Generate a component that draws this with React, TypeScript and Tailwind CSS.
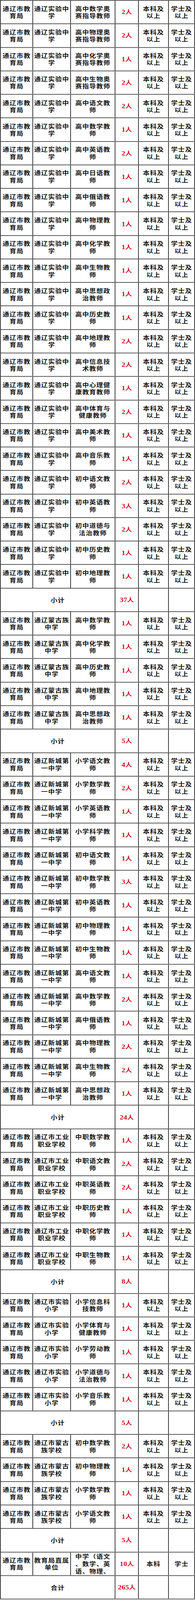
import React, { useLayoutEffect, useState } from 'react';

type Job = { kind: 'job'; school: string; post: string; n: number; edu?: string; deg?: string };
type Sub = { kind: 'sub'; label: string; n: number };
type Row = Job | Sub;

const SY = '通辽实验中学';
const MG = '通辽蒙古族中学';
const XC = '通辽新城第一中学';
const GY = '通辽市工业职业学校';
const XX = '通辽市实验小学';
const MX = '通辽市蒙古族学校';

const j = (school: string, post: string, n: number): Job => ({ kind: 'job', school, post, n });

const rows: Row[] = [
    j(SY, '高中数学奥赛指导教师', 2),
    j(SY, '高中物理奥赛指导教师', 2),
    j(SY, '高中化学奥赛指导教师', 1),
    j(SY, '高中生物奥赛指导教师', 2),
    j(SY, '高中语文教师', 2),
    j(SY, '高中数学教师', 1),
    j(SY, '高中英语教师', 2),
    j(SY, '高中日语教师', 1),
    j(SY, '高中俄语教师', 1),
    j(SY, '高中物理教师', 1),
    j(SY, '高中化学教师', 1),
    j(SY, '高中生物教师', 1),
    j(SY, '高中思想政治教师', 1),
    j(SY, '高中历史教师', 1),
    j(SY, '高中地理教师', 2),
    j(SY, '高中信息技术教师', 2),
    j(SY, '高中心理健康教育教师', 1),
    j(SY, '高中体育与健康教师', 2),
    j(SY, '高中美术教师', 1),
    j(SY, '高中音乐教师', 1),
    j(SY, '初中语文教师', 2),
    j(SY, '初中英语教师', 3),
    j(SY, '初中道德与法治教师', 2),
    j(SY, '初中历史教师', 1),
    j(SY, '初中地理教师', 1),
    { kind: 'sub', label: '小计', n: 37 },
    j(MG, '高中数学教师', 1),
    j(MG, '高中化学教师', 1),
    j(MG, '高中历史教师', 1),
    j(MG, '高中地理教师', 1),
    j(MG, '高中思想政治教师', 1),
    { kind: 'sub', label: '小计', n: 5 },
    j(XC, '小学语文教师', 4),
    j(XC, '小学数学教师', 2),
    j(XC, '小学英语教师', 1),
    j(XC, '小学科学教师', 1),
    j(XC, '初中语文教师', 1),
    j(XC, '初中数学教师', 3),
    j(XC, '初中英语教师', 1),
    j(XC, '初中物理教师', 1),
    j(XC, '初中生物教师', 1),
    j(XC, '高中语文教师', 1),
    j(XC, '高中数学教师', 2),
    j(XC, '高中俄语教师', 1),
    j(XC, '高中物理教师', 2),
    j(XC, '高中生物教师', 2),
    j(XC, '高中思想政治教师', 1),
    { kind: 'sub', label: '小计', n: 24 },
    j(GY, '中职数学教师', 1),
    j(GY, '中职语文教师', 2),
    j(GY, '中职英语教师', 2),
    j(GY, '中职历史教师', 1),
    j(GY, '中职化学教师', 1),
    j(GY, '中职生物教师', 1),
    { kind: 'sub', label: '小计', n: 8 },
    j(XX, '小学信息科技教师', 1),
    j(XX, '小学体育与健康教师', 1),
    j(XX, '小学劳动教师', 1),
    j(XX, '小学道德与法治教师', 1),
    j(XX, '小学音乐教师', 1),
    { kind: 'sub', label: '小计', n: 5 },
    j(MX, '初中数学教师', 2),
    j(MX, '初中物理教师', 1),
    j(MX, '小学数学教师', 1),
    j(MX, '小学语文教师', 1),
    { kind: 'sub', label: '小计', n: 5 },
    { kind: 'job', school: '教育局直属单位', post: '中学（语文、数学、英语、物理、', n: 10, edu: '本科', deg: '学士' },
    { kind: 'sub', label: '合计', n: 265 },
];

const FULL_H = 4850;

// split text into lines of n characters
const chunk = (s: string, n: number) => {
    const out: string[] = [];
    for (let i = 0; i < s.length; i += n) out.push(s.slice(i, i + n));
    return out;
};

const cell = 'h-full min-w-0 flex items-center justify-center text-center border-r-2 border-[#3c3c3c] overflow-hidden';

const Lines = ({ text, n }: { text: string; n: number }) => (
    <div className="leading-[22px]">
        {chunk(text, n).map((l, i) => (
            <span key={i} className="block whitespace-nowrap">{l}</span>
        ))}
    </div>
);

const Count = ({ n }: { n: number }) => (
    <span className="text-[#d3111f] font-bold tracking-normal leading-[22px]">
        <span className="font-['Liberation_Serif',serif] text-[19px]">{n}</span>人
    </span>
);

export default function App() {
    // the window may come out shorter than the table; squeeze the table to fit it
    const [scale, setScale] = useState(1);
    useLayoutEffect(() => {
        const h = window.innerHeight;
        setScale(h > 0 && h < FULL_H ? h / FULL_H : 1);
    }, []);

    return (
        <div className="w-[500px] overflow-hidden bg-white" style={{ height: FULL_H * scale }}>
            <div style={{ transform: `scaleY(${scale})`, transformOrigin: 'top left' }}>
                <div
                    className="w-[500px] border-l-2 border-t-2 border-[#3c3c3c] text-[17px] tracking-[1px] text-[#151515] font-semibold"
                    style={{ fontFamily: '"Noto Sans CJK SC", "Noto Sans CJK TC", sans-serif' }}
                >
                    {rows.map((r, idx) => (
                        <div
                            key={idx}
                            className="grid grid-cols-[83px_97px_114px_60px_77px_67px] h-[71.28px] border-b-2 border-[#3c3c3c] overflow-hidden"
                        >
                            {r.kind === 'sub' ? (
                                <>
                                    <div className={`${cell} col-span-3`}>{r.label}</div>
                                    <div className={cell}><Count n={r.n} /></div>
                                    <div className={cell} />
                                    <div className={cell} />
                                </>
                            ) : (
                                <>
                                    <div className={cell}><Lines text="通辽市教育局" n={4} /></div>
                                    <div className={cell}><Lines text={r.school} n={5} /></div>
                                    <div className={cell}><Lines text={r.post} n={5} /></div>
                                    <div className={cell}><Count n={r.n} /></div>
                                    <div className={cell}><Lines text={r.edu ?? '本科及以上'} n={3} /></div>
                                    <div className={cell}><Lines text={r.deg ?? '学士及以上'} n={3} /></div>
                                </>
                            )}
                        </div>
                    ))}
                </div>
            </div>
        </div>
    );
}
